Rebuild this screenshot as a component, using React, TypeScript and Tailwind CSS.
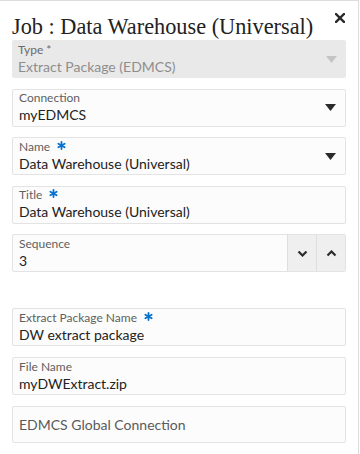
import React from 'react';

const sans = "font-['Lato','Open_Sans',sans-serif]";

const Star = () => (
  <svg width="9" height="9" viewBox="0 0 10 10" className="ml-[7px] -mt-[3px] inline-block">
    <g stroke="#0572ce" strokeWidth="2" strokeLinecap="round">
      <line x1="5" y1="1" x2="5" y2="9" />
      <line x1="1.5" y1="3" x2="8.5" y2="7" />
      <line x1="1.5" y1="7" x2="8.5" y2="3" />
    </g>
  </svg>
);

const Caret = ({ light }: { light?: boolean }) => (
  <svg width="11" height="7" viewBox="0 0 11 7" className="mr-[9px]">
    <path d="M0 0 H11 L5.5 7 Z" fill={light ? '#c4c4c4' : '#2b2b2b'} />
  </svg>
);

interface FieldProps {
  label: string;
  value: string;
  required?: boolean;
  select?: boolean;
}

const Field: React.FC<FieldProps> = ({ label, value, required, select }) => (
  <div className="h-[38px] flex items-center rounded-[2px] border border-[#e3e3e3] bg-[#fcfcfc]">
    <div className="flex-1 pl-[6px] min-w-0">
      <div className="text-[12px] leading-[14px] text-[#5f5f5f] flex items-center">
        {label}
        {required && <Star />}
      </div>
      <div className="text-[14px] leading-[19px] text-[#222]">{value}</div>
    </div>
    {select && <Caret />}
  </div>
);

export default function App() {
  return (
    <div className={`w-[359px] h-[454px] bg-white border-t border-r border-[#dcdcdc] ${sans}`}>
      <div className="flex items-start justify-between pl-[12px] pr-[13px] pt-[12px]">
        <h1 className="font-['Liberation_Serif',serif] text-[22.3px] leading-[28px] text-[#222]">
          Job : Data Warehouse (Universal)
        </h1>
        <svg width="10" height="10" viewBox="0 0 10 10" className="mt-[0px]">
          <g stroke="#2b2b2b" strokeWidth="2.4" strokeLinecap="square">
            <line x1="1" y1="1" x2="9" y2="9" />
            <line x1="9" y1="1" x2="1" y2="9" />
          </g>
        </svg>
      </div>

      <div className="flex flex-col gap-[10.5px] pl-[12px] pr-[12px] -mt-[1px]">
        <div className="h-[38px] flex items-center rounded-[2px] bg-[#e9e9e9]">
          <div className="flex-1 pl-[6px]">
            <div className="text-[12px] leading-[14px] text-[#6a6a6a]">Type *</div>
            <div className="text-[14px] leading-[19px] text-[#8e8e8e]">Extract Package (EDMCS)</div>
          </div>
          <Caret light />
        </div>
        <Field label="Connection" value="myEDMCS" select />
        <Field label="Name" value="Data Warehouse (Universal)" required select />
        <Field label="Title" value="Data Warehouse (Universal)" required />
        <div className="h-[38px] flex rounded-[2px] border border-[#e3e3e3] bg-[#fcfcfc]">
          <div className="flex-1 pl-[6px] flex flex-col justify-center">
            <div className="text-[12px] leading-[14px] text-[#5f5f5f]">Sequence</div>
            <div className="text-[14px] leading-[19px] text-[#222]">3</div>
          </div>
          <div className="w-[29px] flex items-center justify-center bg-[#efefef] border-l border-[#dedede]">
            <svg width="11" height="7" viewBox="0 0 11 7">
              <path d="M1.5 1.5 L5.5 5.5 L9.5 1.5" fill="none" stroke="#2b2b2b" strokeWidth="2.2" />
            </svg>
          </div>
          <div className="w-[29px] flex items-center justify-center bg-[#efefef] border-l border-[#dedede]">
            <svg width="11" height="7" viewBox="0 0 11 7">
              <path d="M1.5 5.5 L5.5 1.5 L9.5 5.5" fill="none" stroke="#2b2b2b" strokeWidth="2.2" />
            </svg>
          </div>
        </div>
      </div>

      <div className="flex flex-col gap-[11px] pl-[12px] pr-[12px] mt-[36px]">
        <Field label="Extract Package Name" value="DW extract package" required />
        <Field label="File Name" value="myDWExtract.zip" />
        <div className="h-[37px] flex items-center rounded-[2px] border border-[#e3e3e3] bg-[#fcfcfc] pl-[6px] text-[14px] text-[#5a5a5a]">
          EDMCS Global Connection
        </div>
      </div>
    </div>
  );
}
